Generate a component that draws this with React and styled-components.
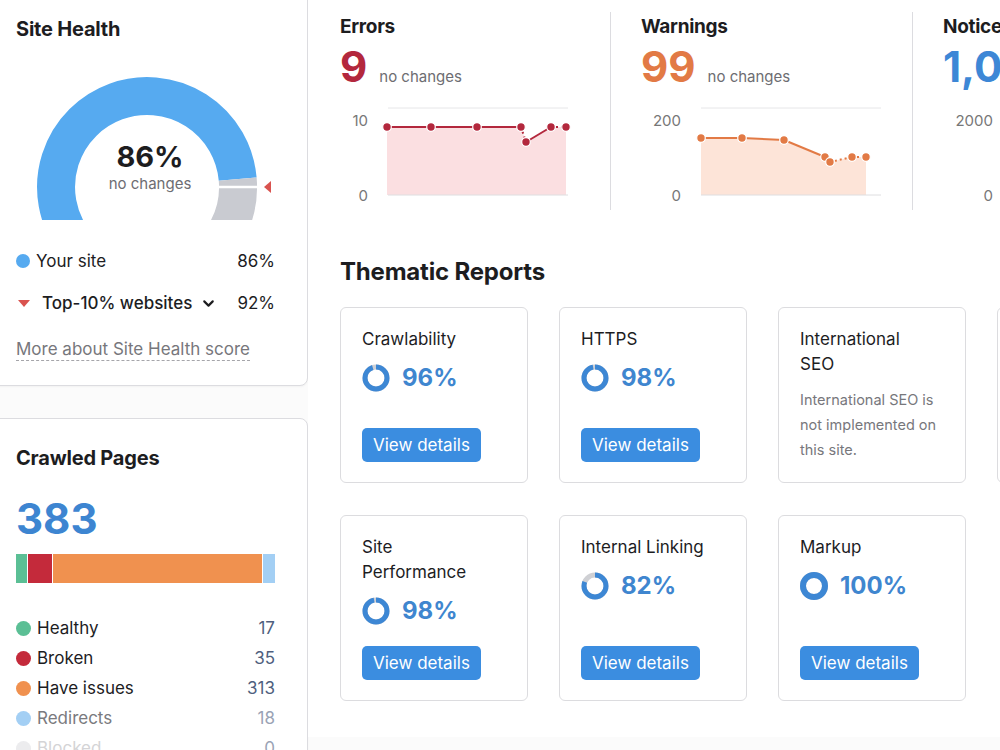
import React from "react";
import styled, { createGlobalStyle } from "styled-components";
import { ChevronDown } from "lucide-react";

const GlobalStyle = createGlobalStyle`
  html, body {
    margin: 0;
    padding: 0;
    background: #fbfbfb;
    font-family: Inter, "Noto Sans", sans-serif;
    color: #1d1d1f;
    overflow: hidden;
  }
`;

const stats = [
  {
    title: "Errors",
    value: "9",
    color: "#b3283d",
    fill: "#fbdfe1",
    axis: ["10", "0"],
    axisX: 28,
    points: [[47, 22], [91, 22], [137, 22], [181, 22], [186, 37], [211, 22], [226, 22]],
    dashed: [3, 5],
  },
  {
    title: "Warnings",
    value: "99",
    color: "#e27a45",
    fill: "#fde4d8",
    axis: ["200", "0"],
    axisX: 40,
    points: [[60, 33], [101, 33], [143, 35], [184, 52], [189, 57], [211, 52], [225, 52]],
    dashed: [4, 5],
  },
  {
    title: "Notices",
    value: "1,087",
    color: "#3d87d6",
    fill: "#dcecfb",
    axis: ["2000", "0"],
    axisX: 50,
    points: [],
    dashed: [],
  },
];

const reports = [
  { title: "Crawlability", score: 96 },
  { title: "HTTPS", score: 98 },
  { title: "International\nSEO", note: "International SEO is not implemented on this site." },
  { title: "Core Web Vitals", score: 74 },
  { title: "Site\nPerformance", score: 98 },
  { title: "Internal Linking", score: 82 },
  { title: "Markup", score: 100 },
];

const crawled = [
  { label: "Healthy", value: 17, color: "#5bbf95", text: "#1d1d1f" },
  { label: "Broken", value: 35, color: "#c42a3b", text: "#1d1d1f" },
  { label: "Have issues", value: 313, color: "#f0914f", text: "#1d1d1f" },
  { label: "Redirects", value: 18, color: "#a3cff4", text: "#7a7a7e" },
  { label: "Blocked", value: 0, color: "#ececee", text: "#d4d4d6" },
];

const Gauge = () => (
  <GaugeWrap>
    <svg width="270" height="152" viewBox="0 0 270 152">
      <defs>
        <clipPath id="gaugeCut">
          <rect x="0" y="0" width="270" height="149" />
        </clipPath>
      </defs>
      <g clipPath="url(#gaugeCut)" fill="none" strokeWidth="38">
        <path d="M56.5 168.2 A91 91 0 1 1 221.7 108.1" stroke="#56aaf0" />
        <path d="M221.7 108.1 A91 91 0 0 1 205.5 168.2" stroke="#c9cbd1" />
      </g>
      <line x1="202" y1="116" x2="242" y2="116" stroke="#fff" strokeWidth="2.5" />
      <polygon points="248,116 255,110 255,122" fill="#d9534f" />
    </svg>
    <GaugeCenter>
      <GaugeValue>86%</GaugeValue>
      <GaugeNote>no changes</GaugeNote>
    </GaugeCenter>
  </GaugeWrap>
);

const Chart = ({ stat }) => {
  const pts = stat.points;
  const first = pts[0];
  const last = pts[pts.length - 1];
  const area = pts.length
    ? `${pts.map((p) => p.join(",")).join(" ")} ${last[0]},90 ${first[0]},90`
    : "";
  const startX = stat.axisX + 20;
  return (
    <svg width="260" height="100" viewBox="0 0 260 100">
      <text x={stat.axisX} y="21" textAnchor="end" fontSize="15" fill="#777" fontFamily="Inter, sans-serif">
        {stat.axis[0]}
      </text>
      <text x={stat.axisX} y="96" textAnchor="end" fontSize="15" fill="#777" fontFamily="Inter, sans-serif">
        {stat.axis[1]}
      </text>
      <line x1={startX} y1="3" x2={startX + 180} y2="3" stroke="#e6e6e8" />
      {pts.length > 0 && <polygon points={area} fill={stat.fill} />}
      <line x1={startX} y1="90" x2={startX + 180} y2="90" stroke="#dedee0" />
      {pts.slice(1).map((p, i) => (
        <line
          key={i}
          x1={pts[i][0]}
          y1={pts[i][1]}
          x2={p[0]}
          y2={p[1]}
          stroke={stat.color}
          strokeWidth="2"
          strokeDasharray={stat.dashed.includes(i) ? "2 3" : undefined}
        />
      ))}
      {pts.map((p, i) => (
        <circle key={i} cx={p[0]} cy={p[1]} r="4.3" fill={stat.color} stroke="#fff" strokeWidth="1.2" />
      ))}
    </svg>
  );
};

const Ring = ({ score }) => {
  const r = 11;
  const c = 2 * Math.PI * r;
  const full = score >= 100;
  return (
    <svg width="28" height="28" viewBox="0 0 28 28">
      <circle cx="14" cy="14" r={r} fill="none" stroke="#cfd0d4" strokeWidth={full ? 6 : 5} />
      <circle
        cx="14"
        cy="14"
        r={r}
        fill="none"
        stroke="#3d87d4"
        strokeWidth={full ? 6 : 5}
        strokeDasharray={`${(c * score) / 100 - (full ? 0 : 1)} ${c}`}
        transform="rotate(-90 14 14)"
      />
    </svg>
  );
};

export default function App() {
  const total = crawled.reduce((s, c) => s + c.value, 0);
  return (
    <>
      <GlobalStyle />
      <Page>
        <Side>
          <SideCard $first>
            <CardTitle>Site Health</CardTitle>
            <Gauge />
            <LegendRows>
              <LegendRow>
                <LegendLabel>
                  <Dot $color="#56aaf0" $size={14} />
                  Your site
                </LegendLabel>
                <LegendValue>86%</LegendValue>
              </LegendRow>
              <LegendRow>
                <LegendLabel $strong>
                  <DownMark />
                  Top-10% websites
                  <ChevronDown size={17} strokeWidth={3} />
                </LegendLabel>
                <LegendValue>92%</LegendValue>
              </LegendRow>
            </LegendRows>
            <MoreLink>More about Site Health score</MoreLink>
          </SideCard>

          <SideCard>
            <CardTitle>Crawled Pages</CardTitle>
            <BigCount>383</BigCount>
            <StackBar>
              {crawled
                .filter((c) => c.value > 0)
                .map((c) => (
                  <Segment key={c.label} $color={c.color} style={{ flexGrow: c.value / total }} />
                ))}
            </StackBar>
            <CrawlList>
              {crawled.map((c) => (
                <CrawlRow key={c.label} $color={c.text}>
                  <LegendLabel>
                    <Dot $color={c.color} $size={15} />
                    {c.label}
                  </LegendLabel>
                  <CrawlValue $faded={c.text !== "#1d1d1f"}>{c.value}</CrawlValue>
                </CrawlRow>
              ))}
            </CrawlList>
          </SideCard>
        </Side>

        <Main>
          <StatsRow>
            {stats.map((s) => (
              <StatCol key={s.title}>
                <StatTitle>{s.title}</StatTitle>
                <StatLine>
                  <StatNumber $color={s.color}>{s.value}</StatNumber>
                  <StatNote>no changes</StatNote>
                </StatLine>
                <ChartBox>
                  <Chart stat={s} />
                </ChartBox>
              </StatCol>
            ))}
          </StatsRow>

          <SectionTitle>Thematic Reports</SectionTitle>
          <ReportGrid>
            {reports.map((r) => (
              <ReportCard key={r.title}>
                <ReportTitle>{r.title}</ReportTitle>
                {r.note ? (
                  <ReportNote>{r.note}</ReportNote>
                ) : (
                  <>
                    <Score>
                      <Ring score={r.score} />
                      {r.score}%
                    </Score>
                    <DetailsButton>View details</DetailsButton>
                  </>
                )}
              </ReportCard>
            ))}
          </ReportGrid>
        </Main>
      </Page>
    </>
  );
}

const Page = styled.div`
  display: flex;
  align-items: flex-start;
  width: 1000px;
  height: 750px;
  overflow: hidden;
`;

const Side = styled.aside`
  flex: 0 0 308px;
  display: flex;
  flex-direction: column;
  gap: 32px;
`;

const SideCard = styled.section`
  margin-left: -10px;
  margin-top: ${(p) => (p.$first ? "-12px" : "0")};
  width: 318px;
  box-sizing: border-box;
  padding: ${(p) => (p.$first ? "28px 32px 24px 25px" : "27px 32px 24px 25px")};
  background: #fff;
  border: 1px solid #dcdce0;
  border-radius: 8px;
  box-shadow: 0 1px 2px rgba(0, 0, 0, 0.04);
`;

const CardTitle = styled.h2`
  margin: 0;
  font-size: 20px;
  line-height: 24px;
  font-weight: 700;
  letter-spacing: -0.2px;
  color: #1d1d1f;
`;

const GaugeWrap = styled.div`
  position: relative;
  margin-top: 30px;
  height: 152px;
`;

const GaugeCenter = styled.div`
  position: absolute;
  left: 0;
  width: 268px;
  top: 68px;
  text-align: center;
`;

const GaugeValue = styled.div`
  font-size: 29px;
  line-height: 36px;
  font-weight: 700;
  color: #1d1d1f;
`;

const GaugeNote = styled.div`
  font-size: 15px;
  line-height: 18px;
  color: #6d6d72;
`;

const LegendRows = styled.div`
  margin-top: 25px;
  display: flex;
  flex-direction: column;
  gap: 16px;
`;

const LegendRow = styled.div`
  display: flex;
  justify-content: space-between;
  align-items: center;
  height: 26px;
  font-size: 17px;
`;

const LegendLabel = styled.span`
  display: flex;
  align-items: center;
  gap: 6px;
  font-weight: ${(p) => (p.$strong ? 500 : 400)};
  svg {
    margin-left: 2px;
  }
`;

const LegendValue = styled.span`
  color: #1d1d1f;
`;

const Dot = styled.span`
  width: ${(p) => p.$size}px;
  height: ${(p) => p.$size}px;
  border-radius: 50%;
  background: ${(p) => p.$color};
  flex: none;
`;

const DownMark = styled.span`
  width: 0;
  height: 0;
  margin: 0 6px 0 2px;
  border-left: 6px solid transparent;
  border-right: 6px solid transparent;
  border-top: 7px solid #d9534f;
`;

const MoreLink = styled.a`
  display: inline-block;
  margin-top: 23px;
  font-size: 17px;
  line-height: 21px;
  color: #77777c;
  border-bottom: 1.5px dashed #a5a5aa;
`;

const BigCount = styled.div`
  margin-top: 24px;
  font-size: 42px;
  line-height: 50px;
  font-weight: 700;
  color: #3d85d1;
`;

const StackBar = styled.div`
  margin-top: 10px;
  height: 29px;
  display: flex;
  gap: 1px;
`;

const Segment = styled.div`
  flex-basis: 0;
  background: ${(p) => p.$color};
`;

const CrawlList = styled.div`
  margin-top: 30px;
`;

const CrawlRow = styled.div`
  display: flex;
  justify-content: space-between;
  align-items: center;
  height: 30px;
  font-size: 17px;
  color: ${(p) => p.$color};
`;

const CrawlValue = styled.span`
  color: ${(p) => (p.$faded ? "#9aa3b5" : "#4f5f7e")};
`;

const Main = styled.main`
  flex: 1;
  min-width: 0;
  height: 737px;
  box-sizing: border-box;
  padding: 12px 0 0 32px;
  background: #fff;
  overflow: hidden;
`;

const StatsRow = styled.div`
  display: grid;
  grid-template-columns: 271px 302px 302px;
`;

const StatCol = styled.div`
  height: 195px;
  padding-top: 3px;
  border-right: 1px solid #dcdce0;
  & + & {
    padding-left: 30px;
  }
  &:last-child {
    border-right: none;
  }
`;

const StatTitle = styled.div`
  font-size: 19px;
  line-height: 24px;
  font-weight: 700;
  letter-spacing: -0.3px;
`;

const StatLine = styled.div`
  margin-top: 4px;
  display: flex;
  align-items: baseline;
  gap: 12px;
`;

const StatNumber = styled.span`
  font-size: 42px;
  line-height: 48px;
  font-weight: 700;
  color: ${(p) => p.$color};
`;

const StatNote = styled.span`
  font-size: 15px;
  color: #6d6d72;
`;

const ChartBox = styled.div`
  margin-top: 14px;
  height: 100px;
`;

const SectionTitle = styled.h2`
  margin: 47px 0 20px;
  font-size: 24px;
  line-height: 30px;
  font-weight: 700;
  letter-spacing: -0.2px;
  color: #1d1d1f;
`;

const ReportGrid = styled.div`
  display: grid;
  grid-template-columns: repeat(4, 188px);
  gap: 32px 31px;
`;

const ReportCard = styled.div`
  box-sizing: border-box;
  display: flex;
  flex-direction: column;
  align-items: flex-start;
  padding: 19px 20px 20px 21px;
  border: 1.5px solid #dcdcdf;
  border-radius: 6px;
  background: #fff;
`;

const ReportTitle = styled.div`
  font-size: 17px;
  line-height: 25px;
  color: #1d1d1f;
  white-space: pre-line;
`;

const ReportNote = styled.p`
  margin: 10px 0 0;
  font-size: 14.5px;
  line-height: 25px;
  color: #77777c;
`;

const Score = styled.div`
  margin: 12px 0 21px;
  display: flex;
  align-items: center;
  gap: 12px;
  font-size: 24px;
  line-height: 28px;
  font-weight: 700;
  color: #3f86cf;
`;

const DetailsButton = styled.button`
  margin-top: auto;
  height: 34px;
  padding: 0 11px;
  border: none;
  border-radius: 5px;
  background: #3b8de0;
  color: #fff;
  font-family: inherit;
  font-size: 17px;
  cursor: pointer;
`;
